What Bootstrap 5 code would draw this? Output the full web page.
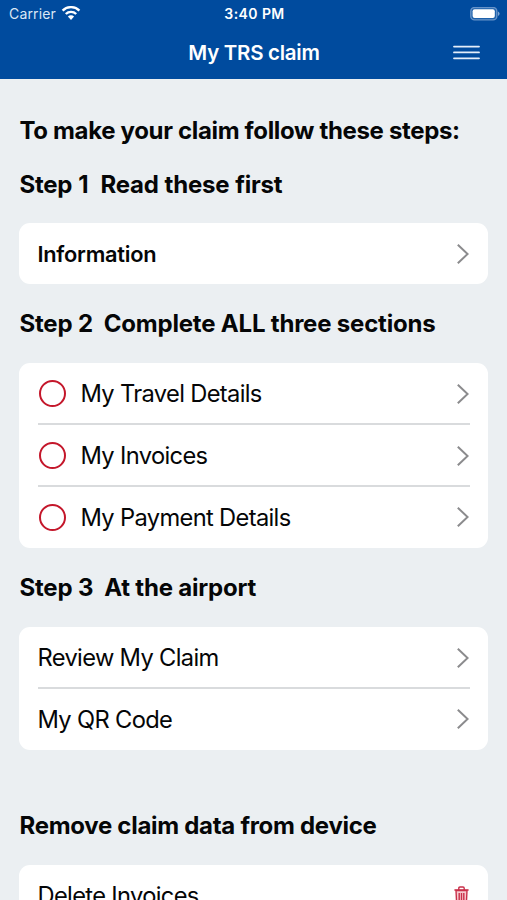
<!DOCTYPE html>
<html lang="en">
<head>
<meta charset="utf-8">
<meta name="viewport" content="width=device-width, initial-scale=1">
<title>My TRS claim</title>
<link href="https://cdn.jsdelivr.net/npm/bootstrap@5.3.0/dist/css/bootstrap.min.css" rel="stylesheet">
<style>
html,body{height:900px;overflow:hidden}
body{background:#ebeff2;color:#050607;font-family:Inter,"Liberation Sans",sans-serif}
svg{display:block;flex:none}
.app-head{height:79.3px;background:#004b9e;color:#fff}
.status{height:27px;font-size:13.5px;line-height:27px;padding:0 7px 0 9px}
.status>*{flex:1 1 0}
.carrier{font-weight:400;color:#dbe7f5;font-size:14px;letter-spacing:.15px}
.wifi{margin-left:5px}
.clock{font-size:14px;letter-spacing:.42px}
.bar{height:52px;padding:0 27px 0 28px}
.bar-title{font-size:20.5px;font-weight:600;line-height:50px;letter-spacing:-.28px}
.page{padding:0 19px}
.hd{font-size:24px;font-weight:700;line-height:30px;height:30px;margin:0;padding:1px 0 0 .5px;white-space:pre;letter-spacing:-.2px}
.h-intro{margin-top:36px;letter-spacing:-.34px}
.h-one{margin:24px 0 23.7px;letter-spacing:-.24px;word-spacing:.6px}
.h-step{margin:24.5px 0 24.5px}
.h-remove{margin:60.5px 0 24.5px;letter-spacing:-.29px}
.panel{background:#fff;border-radius:11px;padding:0 18.5px}
.item{height:60px;font-size:23.7px;white-space:nowrap;padding:2px 1px 0 0;letter-spacing:-.66px}
.item+.item{border-top:2px solid #d9dbdd;height:62px;padding-top:1.4px}
.item+.item:last-child{height:63px;padding-top:0}
.info{font-size:21.8px;font-weight:600;height:61px;letter-spacing:-.25px}
.ring{width:27px;height:27px;border:2.4px solid #c4172b;border-radius:50%;margin:0 14.5px 0 1.5px}
</style>
</head>
<body>
<header class="app-head">
  <div class="status d-flex">
    <div class="d-flex align-items-center carrier"><span>Carrier</span>
      <svg class="wifi" width="20" height="15" viewBox="0 0 20 15" fill="none" stroke="#fff" stroke-width="2.4"><path d="M1.6 4.6a12 12 0 0 1 16.8 0M4.8 8a7.4 7.4 0 0 1 10.4 0"/><path d="M10 13.9 6.9 10.6a4.4 4.4 0 0 1 6.2 0z" fill="#fff" stroke="none"/></svg>
    </div>
    <div class="text-center fw-semibold clock">3:40 PM</div>
    <div class="d-flex justify-content-end align-items-center">
      <svg width="30" height="14" viewBox="0 0 30 14"><rect x=".8" y=".5" width="26" height="12.4" rx="3.7" fill="#1d61ab" stroke="#6693c8" stroke-width="1.4"/><rect x="2.6" y="2.3" width="22.2" height="8.8" rx="2" fill="#fff"/><path d="M28 4.5q1.6.7 1.6 2.2T28 8.9z" fill="#7ea5d2"/></svg>
    </div>
  </div>
  <div class="bar d-flex align-items-center">
    <span style="width:27px"></span>
    <div class="bar-title flex-fill text-center">My TRS claim</div>
    <svg width="27" height="16" viewBox="0 0 27 16" stroke="#e4eefa" stroke-width="1.8" stroke-linecap="round"><path d="M1 1.6h25M1 7.4h25M1 13.3h25"/></svg>
  </div>
</header>
<main class="page">
  <h1 class="hd h-intro">To make your claim follow these steps:</h1>
  <h2 class="hd h-one">Step 1  Read these first</h2>
  <div class="panel">
    <div class="item info d-flex align-items-center justify-content-between"><span>Information</span><svg width="12" height="20" viewBox="0 0 12 20" fill="none" stroke="#8b8b8d" stroke-width="2"><path d="m.8.8 9.8 9.2L.8 19.2"/></svg></div>
  </div>
  <h2 class="hd h-step">Step 2  Complete ALL three sections</h2>
  <div class="panel">
    <div class="item d-flex align-items-center"><span class="ring"></span><span class="me-auto">My Travel Details</span><svg width="12" height="20" viewBox="0 0 12 20" fill="none" stroke="#8b8b8d" stroke-width="2"><path d="m.8.8 9.8 9.2L.8 19.2"/></svg></div>
    <div class="item d-flex align-items-center"><span class="ring"></span><span class="me-auto">My Invoices</span><svg width="12" height="20" viewBox="0 0 12 20" fill="none" stroke="#8b8b8d" stroke-width="2"><path d="m.8.8 9.8 9.2L.8 19.2"/></svg></div>
    <div class="item d-flex align-items-center"><span class="ring"></span><span class="me-auto">My Payment Details</span><svg width="12" height="20" viewBox="0 0 12 20" fill="none" stroke="#8b8b8d" stroke-width="2"><path d="m.8.8 9.8 9.2L.8 19.2"/></svg></div>
  </div>
  <h2 class="hd h-step">Step 3  At the airport</h2>
  <div class="panel">
    <div class="item d-flex align-items-center justify-content-between"><span>Review My Claim</span><svg width="12" height="20" viewBox="0 0 12 20" fill="none" stroke="#8b8b8d" stroke-width="2"><path d="m.8.8 9.8 9.2L.8 19.2"/></svg></div>
    <div class="item d-flex align-items-center justify-content-between"><span>My QR Code</span><svg width="12" height="20" viewBox="0 0 12 20" fill="none" stroke="#8b8b8d" stroke-width="2"><path d="m.8.8 9.8 9.2L.8 19.2"/></svg></div>
  </div>
  <h2 class="hd h-remove">Remove claim data from device</h2>
  <div class="panel">
    <div class="item d-flex align-items-center justify-content-between"><span>Delete Invoices</span><svg width="15" height="20" viewBox="0 0 15 20" fill="none" stroke="#c9304a" stroke-width="1.4"><path d="M2 4.5h11l-.7 14.3H2.7z" fill="#f6c9ce"/><path d="M.4 4h14.2M4.8 3.8V2.2q0-1.2 1.2-1.2h3q1.2 0 1.2 1.2v1.6M5.2 7v9.5M7.5 7v9.5M9.8 7v9.5"/></svg></div>
  </div>
</main>
<script src="https://cdn.jsdelivr.net/npm/bootstrap@5.3.0/dist/js/bootstrap.bundle.min.js"></script>
</body>
</html>
